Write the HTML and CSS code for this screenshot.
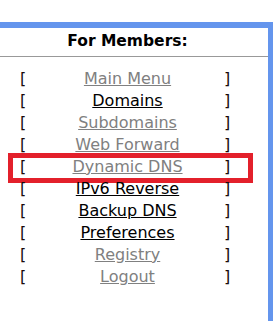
FILE: index.html
```html
<!DOCTYPE html>
<html lang="en">

<head>
    <meta charset="UTF-8">
    <title>For Members</title>
    <link rel="stylesheet" href="styles.css">
</head>

<body>

    <div class="panel">
        <div class="panel-title">For Members:</div>

        <div class="menu">
            <div class="menu-row"><span class="br">[</span><a href="#" class="link visited">Main Menu</a><span class="br br-close">]</span></div>
            <div class="menu-row"><span class="br">[</span><a href="#" class="link">Domains</a><span class="br br-close">]</span></div>
            <div class="menu-row"><span class="br">[</span><a href="#" class="link visited">Subdomains</a><span class="br br-close">]</span></div>
            <div class="menu-row"><span class="br">[</span><a href="#" class="link visited">Web Forward</a><span class="br br-close">]</span></div>
            <div class="menu-row"><span class="br">[</span><a href="#" class="link visited">Dynamic DNS</a><span class="br br-close">]</span><span class="highlight"></span></div>
            <div class="menu-row"><span class="br">[</span><a href="#" class="link">IPv6 Reverse</a><span class="br br-close">]</span></div>
            <div class="menu-row"><span class="br">[</span><a href="#" class="link">Backup DNS</a><span class="br br-close">]</span></div>
            <div class="menu-row"><span class="br">[</span><a href="#" class="link">Preferences</a><span class="br br-close">]</span></div>
            <div class="menu-row"><span class="br">[</span><a href="#" class="link visited">Registry</a><span class="br br-close">]</span></div>
            <div class="menu-row"><span class="br">[</span><a href="#" class="link visited">Logout</a><span class="br br-close">]</span></div>
        </div>
    </div>

</body>

</html>
```

FILE: styles.css
```css
* {
    box-sizing: border-box;
}

body {
    font-family: "DejaVu Sans", Verdana, sans-serif;
    margin: 0;
    padding-top: 22px;
    background-color: #ffffff;
    color: #000000;
}

.panel {
    width: 273px;
    height: 299px;
    border-top: 6px solid #6495ed;
    border-right: 5px solid #6495ed;
}

.panel-title {
    height: 29px;
    padding-right: 13px;
    border-bottom: 1px solid #999999;
    font-size: 15.5px;
    font-weight: bold;
    line-height: 26px;
    text-align: center;
}

.menu {
    padding-top: 11px;
}

.menu-row {
    position: relative;
    display: grid;
    grid-template-columns: 16px 183px 1fr;
    padding-left: 20px;
    font-size: 16px;
    line-height: 22px;
}

.br {
    color: #1a0a0a;
}

.br-close {
    padding-left: 5px;
}

.link {
    color: #000000;
    text-align: center;
}

.link.visited {
    color: #808080;
}

/* red annotation box */
.highlight {
    position: absolute;
    top: -3px;
    left: 8px;
    width: 245px;
    height: 30px;
    border: 5px solid #e3202b;
}
```
